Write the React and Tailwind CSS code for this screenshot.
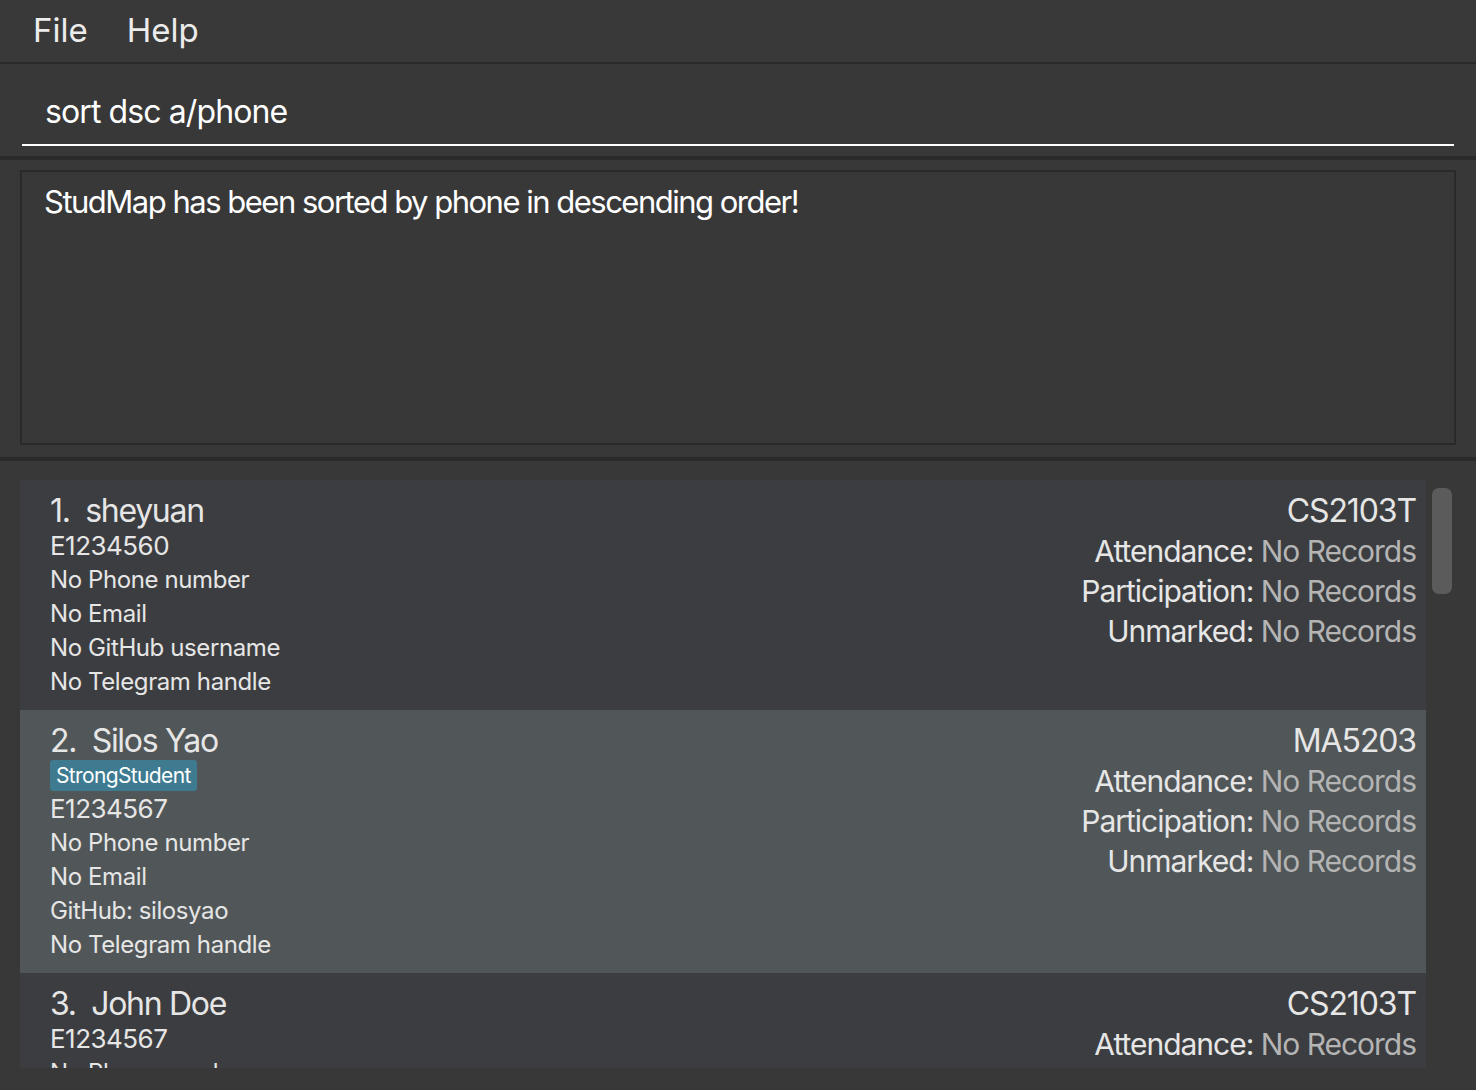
import React from "react";

const font = { fontFamily: "Inter, 'Noto Sans', sans-serif" };

function Card({ idx, name, tag, id, phone, email, github, telegram, course, selected }) {
  return (
    <div className={`flex justify-between pl-[30px] pr-[10px] pt-[13px] pb-[11px] tracking-[-0.025em] ${selected ? "bg-[#515658]" : "bg-[#3c3d40]"}`}>
      <div className="flex flex-col text-[#e6e6e6]">
        <div className="h-[36px] leading-[36px] text-[32px] whitespace-pre tracking-[-0.04em]">{idx}.  {name}</div>
        {tag && (
          <div className="h-[33px] pt-[1px]">
            <span className="inline-block h-[31px] leading-[31px] px-[6px] rounded-[3px] bg-[#3e7b91] text-[21px] text-white tracking-[-0.03em]">{tag}</span>
          </div>
        )}
        <div className="h-[34px] leading-[34px] text-[26px] tracking-[-0.02em]">{id}</div>
        <div className="h-[34px] leading-[34px] text-[24px]">{phone}</div>
        <div className="h-[34px] leading-[34px] text-[24px]">{email}</div>
        <div className="h-[34px] leading-[34px] text-[24px]">{github}</div>
        <div className="h-[34px] leading-[34px] text-[24px]">{telegram}</div>
      </div>
      <div className="flex flex-col items-end text-[#e6e6e6]">
        <div className="h-[36px] leading-[36px] text-[32px] tracking-[-0.035em]">{course}</div>
        <div className="mt-[2px] flex flex-col items-end text-[30px] tracking-[-0.034em]">
          {["Attendance", "Participation", "Unmarked"].map((l) => (
            <div key={l} className="h-[40px] leading-[40px]">
              {l}: <span className="text-[#b4b4b4]">No Records</span>
            </div>
          ))}
        </div>
      </div>
    </div>
  );
}

export default function App() {
  return (
    <div className="w-[1476px] h-[1090px] bg-[#383838] overflow-hidden flex flex-col" style={font}>
      <div className="h-[62px] flex items-center gap-[39px] pl-[33px] text-[33px] text-[#ececec] bg-[#393939]">
        <span>File</span>
        <span>Help</span>
      </div>
      <div className="h-[2px] bg-[#2a2a2a]" />
      <div className="h-[92px] px-[22px] pt-[16px]">
        <div className="h-[66px] border-b-2 border-white flex items-center pl-[23px] text-[32px] text-white tracking-[-0.028em]">
          sort dsc a/phone
        </div>
      </div>
      <div className="h-[4px] bg-[#2a2a2a]" />
      <div className="px-[20px] pt-[10px] pb-[12px]">
        <div className="h-[275px] border-2 border-[#2a2a2a] pl-[22px] pt-[10px] text-[31px] text-white leading-[40px] tracking-[-1.5px]">
          StudMap has been sorted by phone in descending order!
        </div>
      </div>
      <div className="h-[4px] bg-[#2a2a2a]" />
      <div className="flex pl-[20px] pt-[19px] h-[607px]">
        <div className="w-[1406px] h-[588px] overflow-hidden flex flex-col">
          <Card idx={1} name="sheyuan" id="E1234560" phone="No Phone number" email="No Email" github="No GitHub username" telegram="No Telegram handle" course="CS2103T" />
          <Card idx={2} name="Silos Yao" tag="StrongStudent" id="E1234567" phone="No Phone number" email="No Email" github="GitHub: silosyao" telegram="No Telegram handle" course="MA5203" selected />
          <Card idx={3} name="John Doe" id="E1234567" phone="No Phone number" email="No Email" github="No GitHub username" telegram="No Telegram handle" course="CS2103T" />
        </div>
        <div className="w-[30px] pl-[6px] pt-[8px]">
          <div className="w-[20px] h-[106px] rounded-[7px] bg-[#5b5b5b]" />
        </div>
      </div>
    </div>
  );
}
